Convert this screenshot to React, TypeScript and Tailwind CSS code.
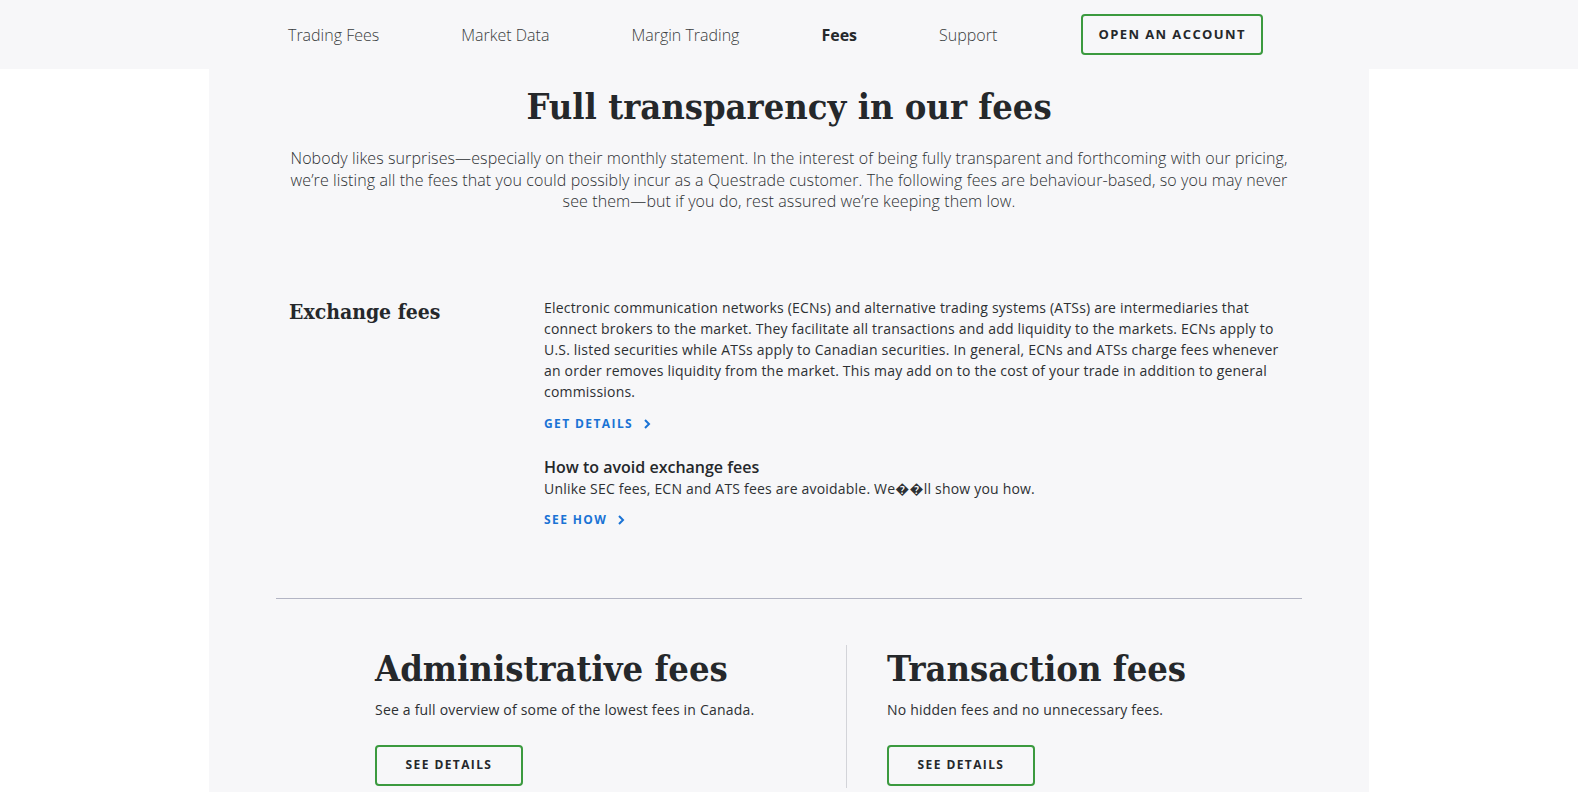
import React from 'react';

const slab = "font-['Roboto_Slab','DejaVu_Serif_Condensed','DejaVu_Serif',serif] font-stretch-condensed";

function Chevron() {
  return (
    <svg width="8" height="12" viewBox="0 0 8 12" className="ml-[10px]">
      <polyline points="2,2 6,6 2,10" fill="none" stroke="currentColor" strokeWidth="2" />
    </svg>
  );
}

function TextLink({ label }: { label: string }) {
  return (
    <a className="inline-flex items-center text-[12px] font-bold tracking-[1.4px] text-[#1a73d5] leading-[16px]">
      {label}
      <Chevron />
    </a>
  );
}

function OutlineButton({ label, className = '' }: { label: string; className?: string }) {
  return (
    <button
      className={`border-2 border-[#3b9a3f] rounded-[4px] text-[12px] font-bold tracking-[1.4px] text-[#25282b] flex items-center justify-center ${className}`}
    >
      {label}
    </button>
  );
}

export default function App() {
  const nav = ['Trading Fees', 'Market Data', 'Margin Trading', 'Fees', 'Support'];

  return (
    <div className="min-h-screen bg-white font-['Open_Sans',sans-serif] text-[#25282b]">
      {/* Top nav */}
      <header className="bg-[#f7f7f9] h-[69px]">
        <div className="w-[1160px] mx-auto h-full flex items-center pl-[79px]">
          <nav className="flex items-center gap-[82px]">
            {nav.map((item) => (
              <a
                key={item}
                className={`text-[16px] ${item === 'Fees' ? 'font-bold text-[#25282b]' : 'font-light text-[#3a3d40]'}`}
              >
                {item}
              </a>
            ))}
          </nav>
          <OutlineButton label="OPEN AN ACCOUNT" className="ml-[84px] w-[182px] h-[41px] text-[13px]" />
        </div>
      </header>

      <main className="w-[1160px] mx-auto bg-[#f7f7f9] pb-[40px]">
        {/* Intro */}
        <section className="pt-[15px] text-center">
          <h1 className={`${slab} text-[36px] leading-[44px] font-bold text-[#25282b]`}>
            Full transparency in our fees
          </h1>
          <p className="w-[1000px] mx-auto mt-[20px] text-[16px] leading-[21.5px] font-light tracking-[0.1px] text-[#2d3033]">
            Nobody likes surprises—especially on their monthly statement. In the interest of being fully transparent and
            forthcoming with our pricing, we’re listing all the fees that you could possibly incur as a Questrade customer.
            The following fees are behaviour-based, so you may never see them—but if you do, rest assured we’re keeping
            them low.
          </p>
        </section>

        {/* Exchange fees */}
        <section className="flex pl-[80px] mt-[84px]">
          <h2 className={`${slab} w-[255px] shrink-0 text-[21px] leading-[28px] font-bold text-[#25282b] mt-[1px]`}>
            Exchange fees
          </h2>
          <div className="w-[752px] tracking-[0.2px]">
            <p className="text-[14px] leading-[21px] text-[#2d3033]">
              Electronic communication networks (ECNs) and alternative trading systems (ATSs) are intermediaries that
              connect brokers to the market. They facilitate all transactions and add liquidity to the markets. ECNs apply
              to U.S. listed securities while ATSs apply to Canadian securities. In general, ECNs and ATSs charge fees
              whenever an order removes liquidity from the market. This may add on to the cost of your trade in addition
              to general commissions.
            </p>
            <div className="mt-[8px]">
              <TextLink label="GET DETAILS" />
            </div>
            <h3 className="mt-[22px] text-[16px] leading-[22px] font-semibold tracking-normal text-[#25282b]">
              How to avoid exchange fees
            </h3>
            <p className="text-[14px] leading-[21px] text-[#2d3033]">
              Unlike SEC fees, ECN and ATS fees are avoidable. We{'\uFFFD\uFFFD'}ll show you how.
            </p>
            <div className="mt-[7px]">
              <TextLink label="SEE HOW" />
            </div>
          </div>
        </section>

        <hr className="w-[1026px] mx-auto mt-[68px] border-0 border-t border-[#b3b5c4]" />

        {/* Admin / Transaction */}
        <section className="flex pl-[166px] mt-[46px]">
          <div className="w-[471px] pb-[2px]">
            <h2 className={`${slab} text-[36px] leading-[46px] font-bold text-[#25282b]`}>Administrative fees</h2>
            <p className="mt-[8px] text-[14px] leading-[21px] tracking-[0.2px] text-[#2d3033]">
              See a full overview of some of the lowest fees in Canada.
            </p>
            <OutlineButton label="SEE DETAILS" className="mt-[25px] w-[148px] h-[41px]" />
          </div>
          <div className="border-l border-[#d3d4d9] pl-[40px]">
            <h2 className={`${slab} text-[36px] leading-[46px] font-bold text-[#25282b]`}>Transaction fees</h2>
            <p className="mt-[8px] text-[14px] leading-[21px] tracking-[0.2px] text-[#2d3033]">
              No hidden fees and no unnecessary fees.
            </p>
            <OutlineButton label="SEE DETAILS" className="mt-[25px] w-[148px] h-[41px]" />
          </div>
        </section>
      </main>
    </div>
  );
}
